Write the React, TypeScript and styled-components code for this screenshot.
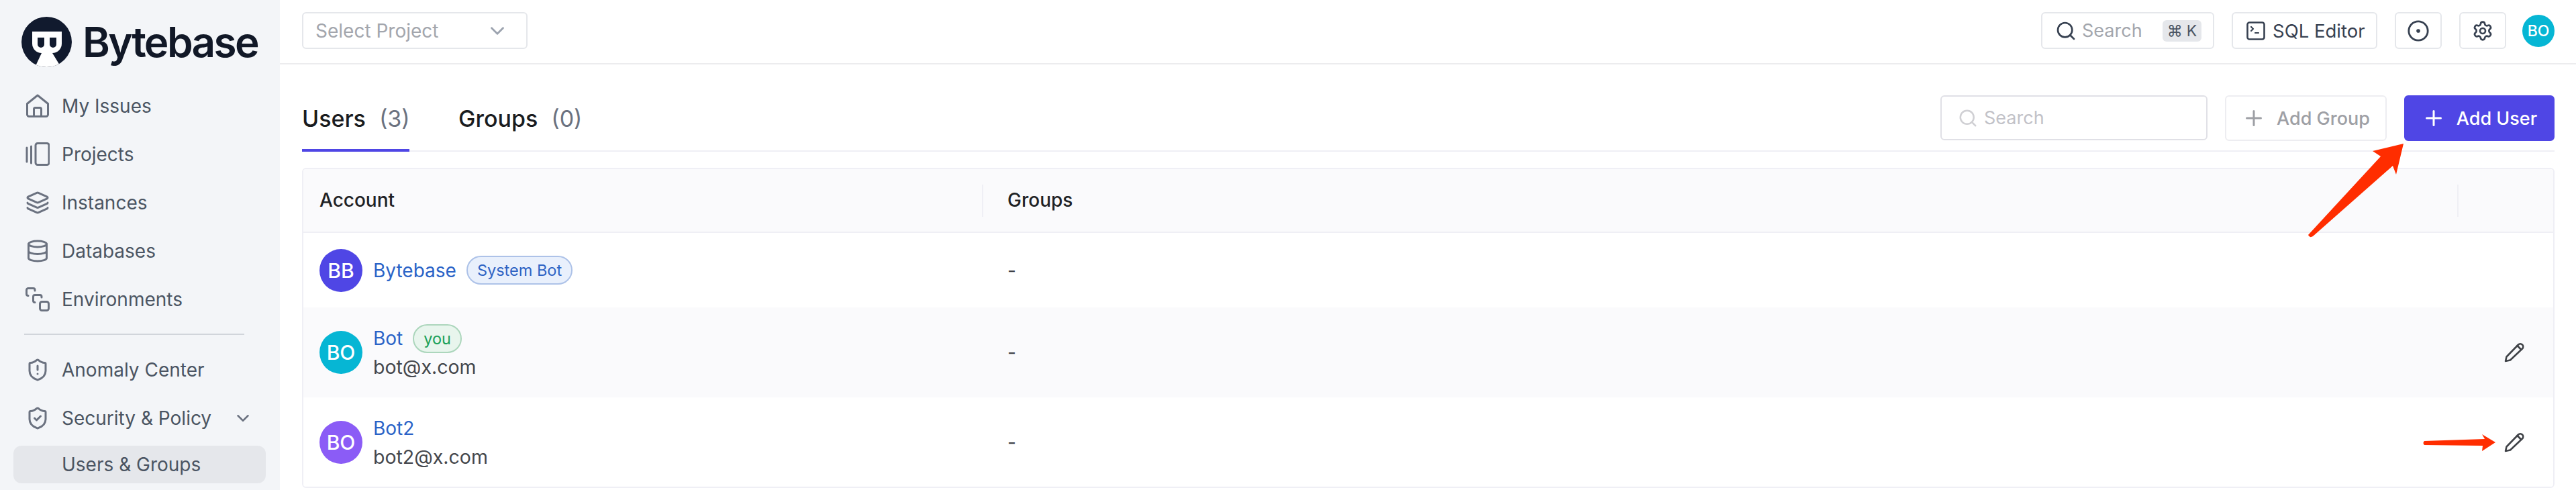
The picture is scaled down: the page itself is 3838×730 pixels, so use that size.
import React from "react";
import styled, { createGlobalStyle } from "styled-components";
import { ChevronDown, CircleDot, Database, Layers, Plus, Search, Settings, ShieldAlert, ShieldCheck } from "lucide-react";

const Global = createGlobalStyle`
  html, body { margin: 0; padding: 0; background: #fff; }
  * { box-sizing: border-box; }
  body { font-family: Inter, "DejaVu Sans", sans-serif; color: #1f2225; }
`;

const Page = styled.div`
  position: relative;
  display: flex;
  width: 3838px;
  height: 730px;
  overflow: hidden;
`;

const Sidebar = styled.aside`
  width: 417px;
  flex: none;
  background: #f3f5f8;
  display: flex;
  flex-direction: column;
`;

const Brand = styled.div`
  display: flex;
  align-items: center;
  gap: 16px;
  height: 100px;
  padding: 24px 0 0 32px;
`;

const BrandName = styled.span`
  font-size: 62px;
  line-height: 75px;
  font-weight: 600;
  letter-spacing: -2.6px;
  color: #111827;
`;

const NavList = styled.nav`
  display: flex;
  flex-direction: column;
  padding-top: 22px;
`;

const NavItem = styled.div`
  display: flex;
  align-items: center;
  height: 72px;
  padding-left: 38px;
  font-size: 28px;
  color: #4b5563;
  svg { flex: none; color: #6b7280; }
`;

const NavLabel = styled.span`
  margin-left: 18px;
  flex: 1;
`;

const NavChevron = styled.span`
  display: flex;
  margin-right: 40px;
`;

const NavDivider = styled.div`
  height: 2px;
  margin: 15px 53px 16px 36px;
  background: #d1d5db;
`;

const SubItem = styled.div`
  display: flex;
  align-items: center;
  height: 56px;
  margin: 5px 21px 0 20px;
  padding-left: 72px;
  border-radius: 12px;
  background: #e5e7eb;
  font-size: 28px;
  color: #4b5563;
`;

const Main = styled.main`
  flex: 1;
  min-width: 0;
  display: flex;
  flex-direction: column;
`;

const TopBar = styled.header`
  height: 96px;
  flex: none;
  border-bottom: 2px solid #ececee;
  padding: 18px 32px 0 33px;
  display: flex;
  align-items: flex-start;
`;

const TopRight = styled.div`
  margin-left: auto;
  display: flex;
  align-items: flex-start;
  gap: 26px;
`;

const BarBox = styled.div<{ $w: number }>`
  width: ${(p) => p.$w}px;
  height: 55px;
  border: 2px solid #e5e7eb;
  border-radius: 6px;
  display: flex;
  align-items: center;
  font-size: 28px;
  background: #fff;
  color: #374151;
`;

const SelectBox = styled(BarBox)`
  padding: 0 26px 0 18px;
  justify-content: space-between;
  color: #a3a6ad;
  svg { color: #9ca3af; }
`;

const SearchBox = styled(BarBox)`
  padding: 0 17px 0 19px;
  gap: 8px;
`;

const Muted = styled.span`
  color: #a3a6ad;
  flex: 1;
  font-size: 27px;
`;

const Kbd = styled.span`
  width: 58px;
  height: 32px;
  border-radius: 6px;
  background: #e5e7eb;
  color: #4b5563;
  font-size: 23px;
  display: flex;
  align-items: center;
  justify-content: center;
  gap: 6px;
`;

const SqlBox = styled(BarBox)`
  padding-left: 20px;
  gap: 11px;
  font-size: 27.5px;
`;

const IconBox = styled(BarBox)`
  justify-content: center;
`;

const Avatar = styled.div<{ $bg: string; $size: number }>`
  width: ${(p) => p.$size}px;
  height: ${(p) => p.$size}px;
  flex: none;
  border-radius: 50%;
  background: ${(p) => p.$bg};
  color: #fff;
  display: flex;
  align-items: center;
  justify-content: center;
  font-weight: 500;
  font-size: ${(p) => (p.$size > 50 ? 30 : 23)}px;
`;

const TopAvatar = styled(Avatar)`
  margin: 4px 0 0 -2px;
`;

const Content = styled.section`
  padding: 0 32px 0 33px;
  display: flex;
  flex-direction: column;
`;

const TabsRow = styled.div`
  height: 130px;
  padding-top: 46px;
  border-bottom: 2px solid #efeff5;
  display: flex;
  align-items: flex-start;
`;

const Tab = styled.div<{ $active?: boolean }>`
  width: ${(p) => (p.$active ? "160px" : "auto")};
  height: 84px;
  margin-right: 73px;
  padding-top: 11px;
  font-size: 34px;
  line-height: 48px;
  font-weight: 500;
  white-space: nowrap;
  color: #1a1c20;
  border-bottom: 4px solid ${(p) => (p.$active ? "#4f46e5" : "transparent")};
`;

const TabCount = styled.span`
  margin-left: 20px;
  font-weight: 400;
  color: #6b7280;
`;

const Tools = styled.div`
  margin-left: auto;
  display: flex;
  gap: 26px;
`;

const FilterInput = styled.div`
  width: 398px;
  height: 67px;
  border: 2px solid #e0e0e6;
  border-radius: 6px;
  padding-left: 24px;
  display: flex;
  align-items: center;
  gap: 9px;
  font-size: 27px;
  color: #c2c2c8;
  svg { color: #d0d0d4; }
`;

const ActionButton = styled.button<{ $primary?: boolean }>`
  width: ${(p) => (p.$primary ? 224 : 241)}px;
  height: 68px;
  border-radius: 6px;
  border: 2px solid ${(p) => (p.$primary ? "#4f46e5" : "#ededf1")};
  background: ${(p) => (p.$primary ? "#4f46e5" : "#fff")};
  color: ${(p) => (p.$primary ? "#fff" : "#9ea0a5")};
  font: 500 27px Inter, sans-serif;
  display: flex;
  align-items: center;
  justify-content: center;
  gap: 16px;
  padding: 0;
`;

const Table = styled.div`
  margin-top: 24px;
  border: 2px solid #efeff5;
  border-radius: 6px;
  overflow: hidden;
`;

const Row = styled.div<{ $h: number; $striped?: boolean }>`
  height: ${(p) => p.$h}px;
  display: grid;
  grid-template-columns: 1011px 1fr 143px;
  align-items: center;
  background: ${(p) => (p.$striped ? "#fafafc" : "#fff")};
`;

const HeadRow = styled(Row)`
  background: #fafafc;
  border-bottom: 2px solid #efeff5;
  font-size: 28px;
  font-weight: 500;
  color: #1f2225;
`;

const HeadCell = styled.div<{ $divider?: boolean }>`
  height: 48px;
  line-height: 46px;
  padding-left: ${(p) => (p.$divider ? "36px" : "24px")};
  border-left: ${(p) => (p.$divider ? "2px solid #efeff5" : "0")};
`;

const AccountCell = styled.div`
  display: flex;
  align-items: center;
  gap: 16px;
  padding-left: 24px;
`;

const GroupCell = styled.div`
  padding-left: 38px;
  font-size: 28px;
  color: #3f4247;
`;

const EditCell = styled.div`
  display: flex;
  justify-content: flex-end;
  padding-right: 43px;
`;

const NameLine = styled.div`
  height: 44px;
  display: flex;
  align-items: center;
  gap: 15px;
  font-size: 28px;
  color: #2a63c7;
`;

const Email = styled.div`
  font-size: 28.5px;
  line-height: 42px;
  color: #45484d;
`;

const Badge = styled.span<{ $tone: "blue" | "green" }>`
  height: 43px;
  padding: 0 14px;
  border-radius: 22px;
  border: 2px solid ${(p) => (p.$tone === "blue" ? "#adc2e8" : "#acd6bc")};
  background: ${(p) => (p.$tone === "blue" ? "#e9f0fc" : "#e8f5ed")};
  color: ${(p) => (p.$tone === "blue" ? "#2f64c4" : "#18a058")};
  font-size: 23.5px;
  display: flex;
  align-items: center;
`;

const Annotations = styled.svg`
  position: absolute;
  left: 0;
  top: 0;
  pointer-events: none;
`;

const Logo = () => (
  <svg width="75" height="75" viewBox="0 0 75 75">
    <defs>
      <clipPath id="logo-clip"><circle cx="37.5" cy="37.5" r="37.5" /></clipPath>
    </defs>
    <circle cx="37.5" cy="37.5" r="37.5" fill="#111a2e" />
    <g clipPath="url(#logo-clip)">
      <path d="M16 22H60V40A14 14 0 0 1 46 54L57 72L60 76H18L22 71L30 54A14 14 0 0 1 16 40Z" fill="#fff" />
    </g>
    <path d="M24 31H34V41A5 5 0 0 1 24 41ZM42 31H52V41A5 5 0 0 1 42 41Z" fill="#111a2e" />
  </svg>
);

const HomeIcon = () => (
  <svg width="36" height="36" viewBox="0 0 36 36" fill="none" stroke="currentColor" strokeWidth="3" strokeLinejoin="round" strokeLinecap="round">
    <path d="M2.5 14.5 18 2 33.5 14.5V30.5A3 3 0 0 1 30.5 33.500H5.500A3 3 0 0 1 2.500 30.500Z" />
    <path d="M12.500 33.500V22.500A2 2 0 0 1 14.500 20.500H21.500A2 2 0 0 1 23.500 22.500V33.500" />
  </svg>
);

const ProjectsIcon = () => (
  <svg width="36" height="36" viewBox="0 0 36 36" fill="none" stroke="currentColor" strokeWidth="3" strokeLinecap="round">
    <path d="M2 8V29M8.500 6V31" />
    <rect x="15" y="1.500" width="20" height="32" rx="3" />
  </svg>
);

const EnvIcon = () => (
  <svg width="36" height="36" viewBox="0 0 36 36" fill="none" stroke="currentColor" strokeWidth="3" strokeLinecap="round">
    <path d="M14 5V4A2.500 2.500 0 0 0 11.500 1.500H4A2.500 2.500 0 0 0 1.500 4V10A2.500 2.500 0 0 0 4 12.500" />
    <path d="M24 15V14A2.500 2.500 0 0 0 21.500 11.500H14A2.500 2.500 0 0 0 11.500 14V20A2.500 2.500 0 0 0 14 22.500" />
    <rect x="21.500" y="21.500" width="13" height="13" rx="3" />
  </svg>
);

const SqlIcon = () => (
  <svg width="28" height="28" viewBox="0 0 28 28" fill="none" stroke="#374151" strokeWidth="2.600" strokeLinecap="round" strokeLinejoin="round">
    <rect x="1.500" y="1.500" width="25" height="25" rx="3" />
    <path d="M7 8 10 11 7 14M13 17H18" strokeWidth="2.200" />
  </svg>
);

const PencilIcon = () => (
  <svg width="30" height="30" viewBox="0 0 30 30" fill="none" stroke="#3f4247" strokeWidth="2.600" strokeLinejoin="round" strokeLinecap="round">
    <path d="M2 28 3.500 21.500 21 3.500A4.200 4.200 0 0 1 27 9.500L9 26.500Z" />
    <path d="M19.500 5 25 10.500" />
  </svg>
);

const navTop = [
  { label: "My Issues", icon: <HomeIcon /> },
  { label: "Projects", icon: <ProjectsIcon /> },
  { label: "Instances", icon: <Layers size={36} strokeWidth={2} /> },
  { label: "Databases", icon: <Database size={36} strokeWidth={2} /> },
  { label: "Environments", icon: <EnvIcon /> },
];

export default function App() {
  return (
    <Page>
      <Global />
      <Sidebar>
        <Brand>
          <Logo />
          <BrandName>Bytebase</BrandName>
        </Brand>
        <NavList>
          {navTop.map((n) => (
            <NavItem key={n.label}>
              {n.icon}
              <NavLabel>{n.label}</NavLabel>
            </NavItem>
          ))}
          <NavDivider />
          <NavItem>
            <ShieldAlert size={36} strokeWidth={2} />
            <NavLabel>Anomaly Center</NavLabel>
          </NavItem>
          <NavItem>
            <ShieldCheck size={36} strokeWidth={2} />
            <NavLabel>Security &amp; Policy</NavLabel>
            <NavChevron><ChevronDown size={30} strokeWidth={2} /></NavChevron>
          </NavItem>
          <SubItem>Users &amp; Groups</SubItem>
        </NavList>
      </Sidebar>
      <Main>
        <TopBar>
          <SelectBox $w={336}>
            <span>Select Project</span>
            <ChevronDown size={34} strokeWidth={2} />
          </SelectBox>
          <TopRight>
            <SearchBox $w={258}>
              <Search size={32} strokeWidth={2} />
              <Muted>Search</Muted>
              <Kbd><span>⌘</span><span>K</span></Kbd>
            </SearchBox>
            <SqlBox $w={217}>
              <SqlIcon />
              <span>SQL Editor</span>
            </SqlBox>
            <IconBox $w={70}><CircleDot size={34} strokeWidth={2} /></IconBox>
            <IconBox $w={70}><Settings size={32} strokeWidth={2} /></IconBox>
            <TopAvatar $bg="#06b6d4" $size={48}>BO</TopAvatar>
          </TopRight>
        </TopBar>
        <Content>
          <TabsRow>
            <Tab $active>Users<TabCount>(3)</TabCount></Tab>
            <Tab>Groups<TabCount>(0)</TabCount></Tab>
            <Tools>
              <FilterInput><Search size={30} strokeWidth={2} /><span>Search</span></FilterInput>
              <ActionButton><Plus size={36} strokeWidth={2} />Add Group</ActionButton>
              <ActionButton $primary><Plus size={36} strokeWidth={2} />Add User</ActionButton>
            </Tools>
          </TabsRow>
          <Table>
            <HeadRow $h={95}>
              <HeadCell>Account</HeadCell>
              <HeadCell $divider>Groups</HeadCell>
              <HeadCell $divider />
            </HeadRow>
            <Row $h={111}>
              <AccountCell>
                <Avatar $bg="#4f46e5" $size={64}>BB</Avatar>
                <NameLine>Bytebase<Badge $tone="blue">System Bot</Badge></NameLine>
              </AccountCell>
              <GroupCell>-</GroupCell>
              <div />
            </Row>
            <Row $h={134} $striped>
              <AccountCell>
                <Avatar $bg="#06b6d4" $size={64}>BO</Avatar>
                <div>
                  <NameLine>Bot<Badge $tone="green">you</Badge></NameLine>
                  <Email>bot@x.com</Email>
                </div>
              </AccountCell>
              <GroupCell>-</GroupCell>
              <EditCell><PencilIcon /></EditCell>
            </Row>
            <Row $h={133}>
              <AccountCell>
                <Avatar $bg="#8b5cf6" $size={64}>BO</Avatar>
                <div>
                  <NameLine>Bot2</NameLine>
                  <Email>bot2@x.com</Email>
                </div>
              </AccountCell>
              <GroupCell>-</GroupCell>
              <EditCell><PencilIcon /></EditCell>
            </Row>
          </Table>
        </Content>
      </Main>
      <Annotations width="3838" height="730" viewBox="0 0 3838 730">
        <path d="M3581 214 3570 260 3565 247 3446 352Q3441 355 3439 350L3547 233 3535 225Z" fill="#ff2d00" />
        <path d="M3718 659 3698 672 3699 664 3612 663Q3609 660 3612 657L3702 654 3698 647Z" fill="#ff2d00" />
      </Annotations>
    </Page>
  );
}
